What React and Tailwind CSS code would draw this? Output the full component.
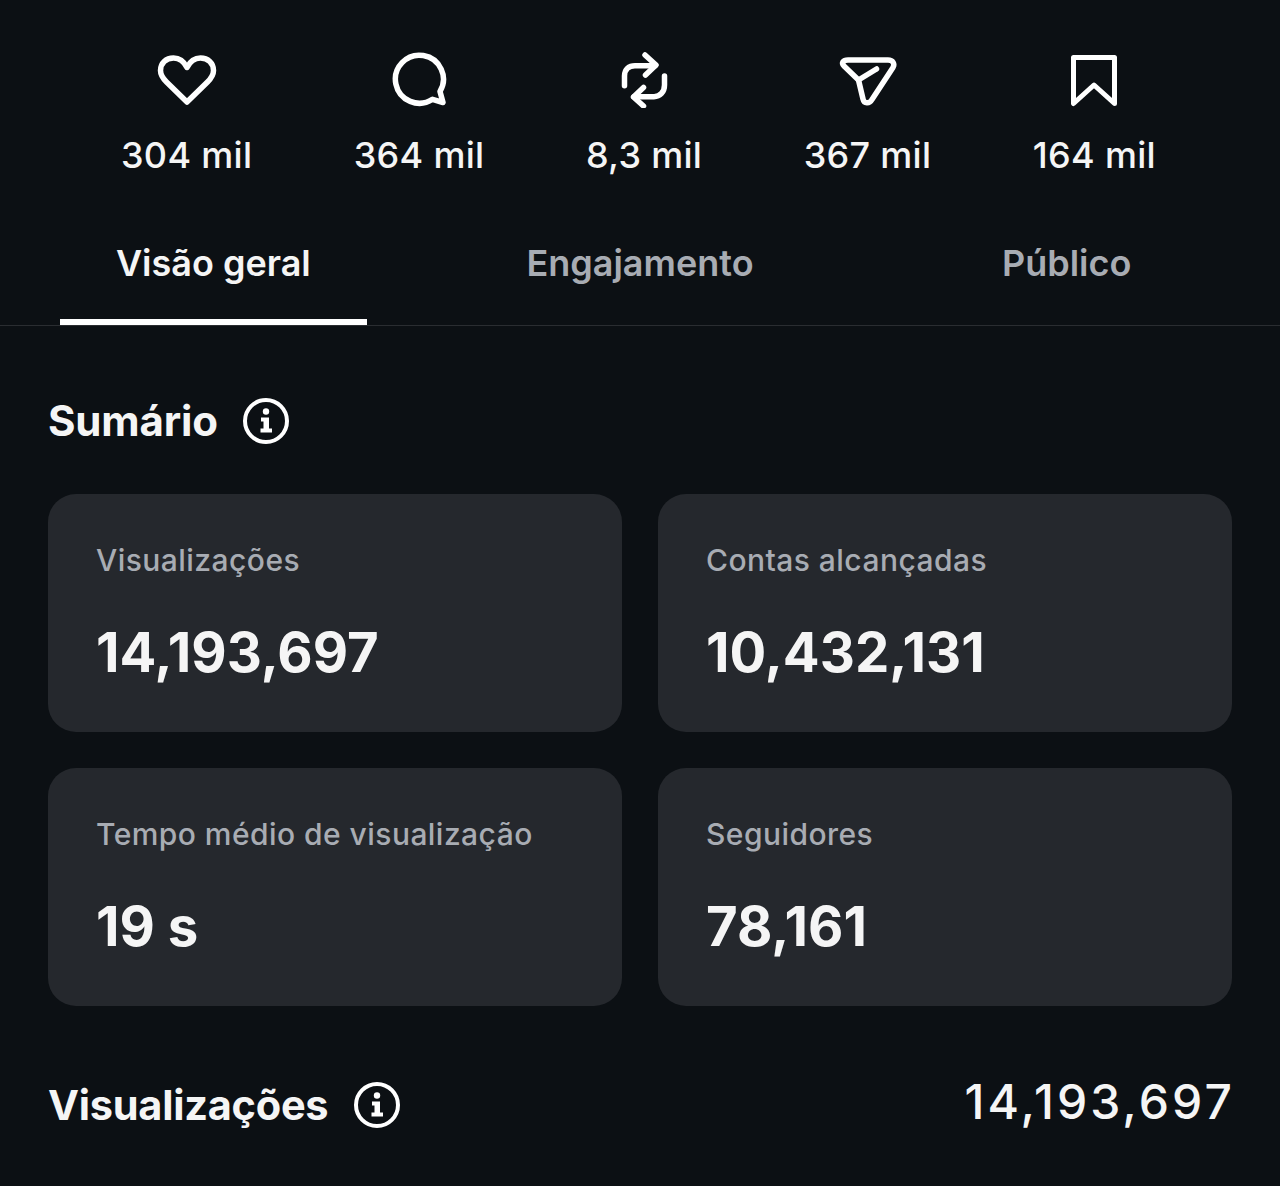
import React from 'react';

const font = 'font-["Inter",sans-serif]';

const HeartIcon = () => (
  <svg width="60" height="56" viewBox="0 0 60 56" fill="none" stroke="white" strokeWidth="5.5" strokeLinejoin="round">
    <path d="M30 50 L9.5 30 C5 25.5 3.5 22 3.5 18.5 C3.5 11 9 6 16.5 6 C22 6 27 9.5 30 15.5 C33 9.5 38 6 43.5 6 C51 6 56.5 11 56.5 18.5 C56.5 22 55 25.5 50.5 30 Z" />
  </svg>
);

const CommentIcon = () => (
  <svg width="60" height="56" viewBox="0 0 60 56" fill="none" stroke="white" strokeWidth="5.5" strokeLinejoin="round" strokeLinecap="round">
    <path d="M51 39.5 A24 24 0 1 0 43.5 47.3 L54 50.5 Z" />
  </svg>
);

const RepostIcon = () => (
  <svg width="60" height="56" viewBox="0 0 60 56" fill="none" stroke="white" strokeWidth="5.5" strokeLinecap="round" strokeLinejoin="round">
    <path d="M10.5 33.7 V24 C10.5 17 15 13.7 21 13.7 H41" />
    <path d="M31 3 L42 13 L31.5 23" />
    <path d="M50.5 24 V33 C50.5 40 46 44.7 40 44.7 H20" />
    <path d="M29.5 35.5 L19.5 45 L29.5 54" />
  </svg>
);

const SendIcon = () => (
  <svg width="60" height="56" viewBox="0 0 60 56" fill="none" stroke="white" strokeWidth="5.5" strokeLinecap="round" strokeLinejoin="round">
    <path d="M10 8 H50 C55 8 57 12 55 15.5 L34 47.5 C31.5 52 26 52 25 47 L20.5 28 L6 14 C3 11 5 8 10 8 Z" />
    <path d="M20.5 28 L38.5 17" />
  </svg>
);

const BookmarkIcon = () => (
  <svg width="60" height="56" viewBox="0 0 60 56" fill="none" stroke="white" strokeWidth="5" strokeLinejoin="round">
    <path d="M9.5 5.5 H50.5 V51.5 L30 33 L9.5 51.5 Z" />
  </svg>
);

const InfoIcon = () => (
  <svg width="48" height="48" viewBox="0 0 48 48" fill="none">
    <circle cx="24" cy="24" r="21" stroke="white" strokeWidth="4" />
    <circle cx="24" cy="14.5" r="3.2" fill="white" />
    <path d="M19 20.5 H27 V31.5 H30 V35.5 H18.5 V31.5 H21.5 V24.5 H19 Z" fill="white" />
  </svg>
);

const stats = [
  { Icon: HeartIcon, label: '304 mil' },
  { Icon: CommentIcon, label: '364 mil' },
  { Icon: RepostIcon, label: '8,3 mil' },
  { Icon: SendIcon, label: '367 mil' },
  { Icon: BookmarkIcon, label: '164 mil' },
];

const tabs = ['Visão geral', 'Engajamento', 'Público'];

const cards = [
  { title: 'Visualizações', value: '14,193,697' },
  { title: 'Contas alcançadas', value: '10,432,131' },
  { title: 'Tempo médio de visualização', value: '19 s' },
  { title: 'Seguidores', value: '78,161' },
];

export default function App() {
  return (
    <div className={`h-[1186px] w-[1280px] overflow-hidden bg-[#0c1014] text-white ${font}`}>
      <div className="flex gap-[101.5px] pl-[121px] pt-[52px]">
        {stats.map(({ Icon, label }) => (
          <div key={label} className="flex flex-col items-center gap-[25px]">
            <Icon />
            <span className="text-[36px] leading-[44px] font-medium tracking-[0.3px] text-[#f5f5f5]">{label}</span>
          </div>
        ))}
      </div>

      <div className="mt-[42px] grid h-[107px] grid-cols-3 border-b border-[#2a2d31]">
        {tabs.map((tab, i) => (
          <div key={tab} className="flex flex-col items-center">
            <span className={`mt-[22px] flex-1 text-[36px] leading-[44px] font-semibold ${i === 0 ? 'text-[#f5f5f5]' : 'text-[#a8acb3]'}`}>{tab}</span>
            {i === 0 && <div className="h-[6px] w-[307px] bg-white" />}
          </div>
        ))}
      </div>

      <div className="mt-[68px] flex items-center gap-[24px] pl-[48px]">
        <h2 className="text-[42px] leading-[54px] font-bold tracking-[-0.15px] text-[#f5f5f5]">Sumário</h2>
        <InfoIcon />
      </div>

      <div className="mt-[46px] grid grid-cols-2 gap-[36px] px-[48px]">
        {cards.map((card) => (
          <div key={card.title} className="h-[238px] rounded-[28px] bg-[#25282d] pl-[48px] pt-[48px]">
            <div className="text-[30px] leading-[36px] font-medium tracking-[0.45px] text-[#a8acb3]">{card.title}</div>
            <div className="mt-[41px] text-[54.5px] leading-[66px] font-bold text-[#f5f5f5]">{card.value}</div>
          </div>
        ))}
      </div>

      <div className="mt-[72px] flex items-start justify-between px-[48px]">
        <div className="flex items-center gap-[25px]">
          <h2 className="text-[41.5px] leading-[54px] font-bold tracking-[-0.25px] text-[#f5f5f5]">Visualizações</h2>
          <InfoIcon />
        </div>
        <span className="-mr-[3px] text-[48px] leading-[48px] font-medium tracking-[3.1px] text-[#f5f5f5]">14,193,697</span>
      </div>
    </div>
  );
}
